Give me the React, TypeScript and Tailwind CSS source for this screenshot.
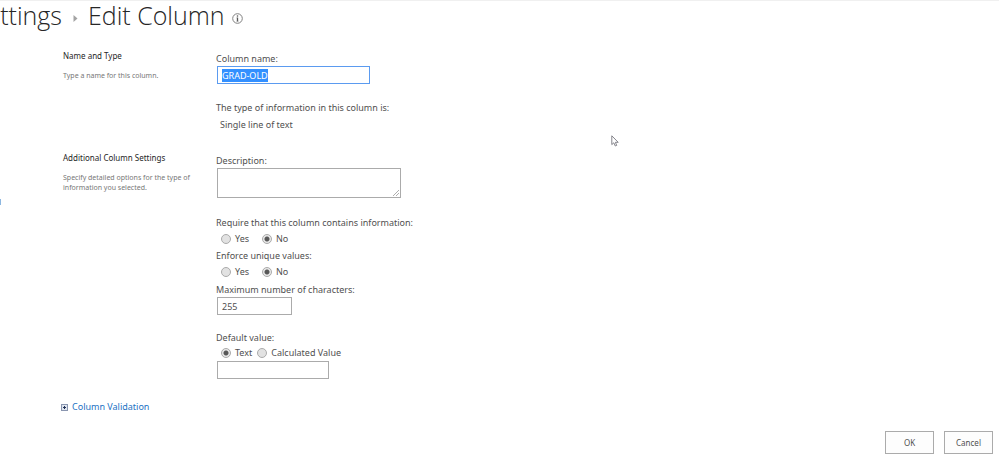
import { useEffect, useRef, useState } from 'react';
import type { ReactNode } from 'react';

interface SectionProps {
  title: string;
  hint: string;
  children: ReactNode;
}

function Section({ title, hint, children }: SectionProps) {
  return (
    <section className="flex">
      <div className="w-[153px] shrink-0 pt-px pr-3">
        <h2 className="text-[8px] leading-[14px] text-[#262626]">{title}</h2>
        <p className="mt-2 text-[7px] leading-[10px] text-[#777777]">{hint}</p>
      </div>
      <div className="min-w-0 flex-1 pt-1">{children}</div>
    </section>
  );
}

interface RadioProps {
  name: string;
  label: string;
  checked: boolean;
  onChange: () => void;
}

function Radio({ name, label, checked, onChange }: RadioProps) {
  return (
    <label className="flex items-center gap-1">
      <input
        type="radio"
        name={name}
        checked={checked}
        onChange={onChange}
        className="size-[10px] appearance-none rounded-full border border-[#ababab] bg-[#e2e2e2] checked:bg-[radial-gradient(circle,#585858_0_2px,#e8e8e8_3px)]"
      />
      {label}
    </label>
  );
}

interface YesNoProps {
  name: string;
  label: string;
}

function YesNo({ name, label }: YesNoProps) {
  const [value, setValue] = useState('No');

  return (
    <fieldset>
      <legend>{label}</legend>
      <div className="mt-[2px] flex gap-[13px] pl-[5px]">
        {['Yes', 'No'].map((option) => (
          <Radio
            key={option}
            name={name}
            label={option}
            checked={value === option}
            onChange={() => setValue(option)}
          />
        ))}
      </div>
    </fieldset>
  );
}

export default function App() {
  const nameRef = useRef<HTMLInputElement>(null);
  const [columnName, setColumnName] = useState('GRAD-OLD');
  const [maxLength, setMaxLength] = useState('255');
  const [defaultType, setDefaultType] = useState('Text');

  useEffect(() => {
    nameRef.current?.focus();
    nameRef.current?.select();
  }, []);

  return (
    <div className="relative min-h-screen overflow-hidden border-t border-[#f0f0f0] bg-white font-['Noto_Sans','Open_Sans',sans-serif] text-[9px] leading-[14px] text-[#505050]">
      {/* Page title */}
      <header className="flex h-[28px] items-start font-['Open_Sans',sans-serif] text-[25px] leading-[28px] font-light text-[#262626]">
        <div className="flex w-[62px] justify-end overflow-hidden pb-2">
          <a href="#settings">Settings</a>
        </div>
        <svg className="mt-[14px] ml-[11px] h-[7px] w-[5px]" viewBox="0 0 5 7" aria-hidden="true">
          <path d="M0.5 0L4.5 3.5L0.5 7Z" fill="#a3a3a3" />
        </svg>
        <h1 className="ml-[10px]">Edit Column</h1>
        <button type="button" aria-label="Information" className="mt-3 ml-[7px] flex">
          <svg className="size-[11px]" viewBox="0 0 11 11" fill="none">
            <circle cx="5.5" cy="5.5" r="4.8" stroke="#808080" />
            <path d="M5.5 4.6V8.4" stroke="#555555" strokeWidth="1.3" />
            <path d="M4.5 4.9H5.5M4.5 8.2H6.5" stroke="#777777" strokeWidth="0.6" />
            <circle cx="5.5" cy="3" r="0.8" fill="#555555" />
          </svg>
        </button>
      </header>

      {/* Clipped end of the side navigation link */}
      <span className="absolute top-[198px] left-0 h-[6px] w-px bg-[#8db7e0]" />

      <form className="pt-[19px] pl-[63px]" onSubmit={(e) => e.preventDefault()}>
        <Section title="Name and Type" hint="Type a name for this column.">
          <label htmlFor="column-name" className="block">Column name:</label>
          <input
            id="column-name"
            ref={nameRef}
            value={columnName}
            onChange={(e) => setColumnName(e.target.value)}
            className="ml-px block h-[18px] w-[153px] border border-[#5b9bf0] px-1 outline-none selection:bg-[#3390ff] selection:text-white"
          />
          <p className="mt-[17px]">The type of information in this column is:</p>
          <p className="mt-[3px] pl-1">Single line of text</p>
        </Section>

        <div className="mt-[18px]">
          <Section
            title="Additional Column Settings"
            hint="Specify detailed options for the type of information you selected."
          >
            <label htmlFor="description" className="block">Description:</label>
            <div className="relative ml-px w-[184px]">
              <textarea
                id="description"
                className="block h-[30px] w-full resize-none border border-[#ababab] px-1 outline-none"
              />
              <svg className="pointer-events-none absolute right-[2px] bottom-[2px] size-[6px]" viewBox="0 0 6 6" stroke="#999999" strokeWidth="0.8">
                <path d="M0 6L6 0M3 6L6 3" />
              </svg>
            </div>

            <div className="mt-[18px] flex flex-col gap-[3px]">
              <YesNo name="required" label="Require that this column contains information:" />
              <YesNo name="unique" label="Enforce unique values:" />
            </div>

            <label htmlFor="max-length" className="mt-1 block">Maximum number of characters:</label>
            <input
              id="max-length"
              value={maxLength}
              onChange={(e) => setMaxLength(e.target.value)}
              className="ml-px block h-[18px] w-[75px] border border-[#ababab] px-1 outline-none"
            />

            <fieldset className="mt-4">
              <legend>Default value:</legend>
              <div className="mt-px flex gap-[5px] pl-[5px]">
                {['Text', 'Calculated Value'].map((option) => (
                  <Radio
                    key={option}
                    name="default-type"
                    label={option}
                    checked={defaultType === option}
                    onChange={() => setDefaultType(option)}
                  />
                ))}
              </div>
              <input
                aria-label="Default value"
                className="mt-px ml-px block h-[18px] w-[112px] border border-[#ababab] px-1 outline-none"
              />
            </fieldset>
          </Section>
        </div>

        <a href="#validation" className="mt-[21px] -ml-[2px] flex items-center gap-1 text-[#2372c4]">
          <svg className="size-[7px]" viewBox="0 0 7 7" fill="none" aria-hidden="true">
            <rect x="0.5" y="0.5" width="6" height="6" fill="#dfe5ee" stroke="#8a96b0" />
            <path d="M2 3.5H5M3.5 2V5" stroke="#1f2f55" />
          </svg>
          Column Validation
        </a>

        <div className="mt-[17px] flex justify-end gap-[10px] pr-[6px] text-[8px]">
          <button type="submit" className="h-[23px] w-[49px] border border-[#ababab] bg-[#fdfdfd]">OK</button>
          <button type="button" className="h-[23px] w-[49px] border border-[#ababab] bg-[#fdfdfd]">Cancel</button>
        </div>
      </form>

      {/* Mouse pointer */}
      <svg className="pointer-events-none absolute top-[134px] left-[611px] h-[12px] w-[8px]" viewBox="0 0 8 12" aria-hidden="true">
        <path d="M0.8 0.8V9.6L2.8 7.8L4.3 11L5.7 10.4L4.4 7.3H7.2Z" fill="#ffffff" stroke="#77777f" strokeWidth="0.9" />
      </svg>
    </div>
  );
}
